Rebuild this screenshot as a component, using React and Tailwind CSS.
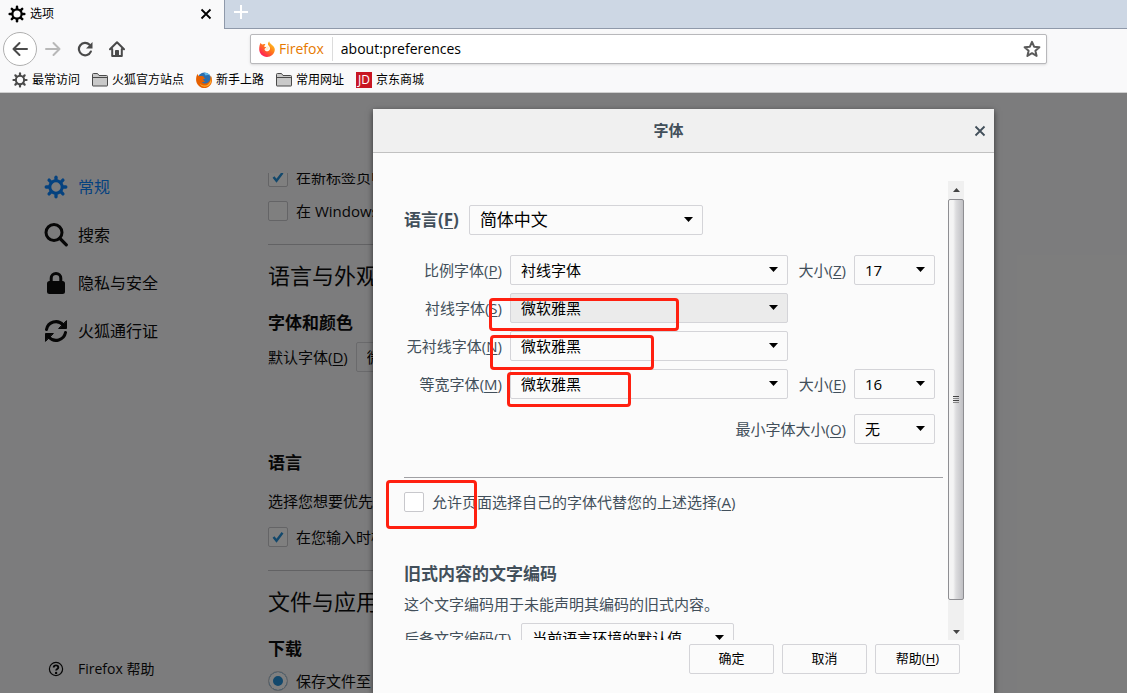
import { useState } from 'react';
import clsx from 'clsx';

const GearIcon = ({ className }) => (
  <svg className={className} viewBox="0 0 24 24" fill="none" stroke="currentColor" strokeLinecap="round">
    <circle cx="12" cy="12" r="6.2" strokeWidth="3" />
    {[0, 45, 90, 135, 180, 225, 270, 315].map((deg) => (
      <path key={deg} d="M12 5V2.2" strokeWidth="3.3" transform={`rotate(${deg} 12 12)`} />
    ))}
  </svg>
);

const SearchIcon = ({ className }) => (
  <svg className={className} viewBox="0 0 24 24" fill="none" stroke="currentColor" strokeLinecap="round">
    <circle cx="10" cy="9.5" r="8" strokeWidth="3" />
    <path d="M16 15.5l6.3 6.3" strokeWidth="3.2" />
  </svg>
);

const LockIcon = ({ className }) => (
  <svg className={className} viewBox="0 0 24 24" fill="none">
    <rect x="3" y="10" width="18" height="13" rx="2.5" fill="currentColor" />
    <path d="M7.2 11V7.2a4.8 4.8 0 0 1 9.6 0V11" stroke="currentColor" strokeWidth="3" />
  </svg>
);

const SyncIcon = ({ className }) => (
  <svg className={className} viewBox="0 0 24 24" fill="none" stroke="currentColor" strokeWidth="3" strokeLinecap="round">
    <path d="M2.5 10.5A9.6 9.6 0 0 1 19 5.8" />
    <path d="M21.5 13.5A9.6 9.6 0 0 1 5 18.2" />
    <path d="M22.5 2v7.5H15z" fill="currentColor" strokeWidth="1" strokeLinejoin="round" />
    <path d="M1.5 22v-7.5H9z" fill="currentColor" strokeWidth="1" strokeLinejoin="round" />
  </svg>
);

const HelpIcon = ({ className }) => (
  <svg className={className} viewBox="0 0 16 16" fill="none" stroke="currentColor">
    <circle cx="8" cy="8" r="6.6" strokeWidth="1.2" />
    <path d="M5.7 6.5C5.7 3.6 10.3 3.7 10.3 6.4c0 1.600-2.200 1.600-2.200 3.200" strokeWidth="1.9" />
    <circle cx="8.1" cy="11.9" r="1.2" fill="currentColor" stroke="none" />
  </svg>
);

const CloseIcon = ({ className }) => (
  <svg className={className} viewBox="0 0 12 12" fill="none" stroke="currentColor" strokeWidth="1.8">
    <path d="M1.5 1.5l9 9M10.5 1.5l-9 9" />
  </svg>
);

const FolderIcon = () => (
  <svg className="h-4 w-4" viewBox="0 0 16 16" fill="#c9c9c9" stroke="#4a4a4a">
    <path d="M.5 13.500v-11q0-1 1-1h4l1.500 2h7.500q1 0 1 1v9q0 .5-.5.500h-14q-.5 0-.5-.5z" />
    <path d="M.5 5.500h15" />
  </svg>
);

// Orange fox wrapped around a blue globe
const GlobeFoxIcon = () => (
  <svg className="h-4 w-4" viewBox="0 0 16 16">
    <circle cx="8.4" cy="7.4" r="6.8" fill="#2a6fb0" />
    <path d="M8 .8c2.600-.3 5 1 6 2.600-2-.8-3.400-.6-4.600.2z" fill="#5bb4e6" />
    <path d="M1.500 1.800C.2 4.200-.2 7.500.3 9.400 1.300 13.400 4.600 16 8.300 16c4.400 0 7.500-3.600 7.700-7.600.1-2-.5-4-1.500-5 .4 2.400-.2 5.600-2.400 7.200-2.300 1.700-5.400 1-6.400-.9 1.500.7 2.800.2 3.800-.7-1.700.2-2.600-.8-2.300-1.900.9.200 1.800-.2 1.900-.8-.9-.4-1.600-.8-1.400-1.900C5 4 4 4 3.200 4.300 2.500 3.700 1.700 2.900 1.500 1.800z" fill="#e66000" />
    <path d="M14.500 3.400c1 3.600 0 7.400-2.900 9.300-2.700 1.600-6 .8-7.900-1.500 1.300 4 6.600 4.700 9.600 1.900 2.400-2.300 2.800-6.700 1.200-9.700z" fill="#ffb02e" />
  </svg>
);

const FlameIcon = () => (
  <svg className="h-4 w-4" viewBox="0 0 16 16">
    <defs>
      <linearGradient id="flame" x1="1" y1="0" x2=".2" y2="1">
        <stop offset="0" stopColor="#ffe226" />
        <stop offset=".5" stopColor="#ff7a1a" />
        <stop offset="1" stopColor="#ff1060" />
      </linearGradient>
    </defs>
    <path d="M1.800 1.800C2.100 2.800 2.700 3.300 3.400 3.600 4.300 2.900 5.500 2.900 6.400 3.300L5 5.600l2.200.6C7 7.200 5.600 7.300 5.500 8.200c.3 1.800 2.500 2.800 4.200 1.600 2-1.400 1.400-4.200-.2-5.400C8.400 3.300 9 1.400 10.200.2c.2 1.900 2 2.700 3.400 4.200 1.600 1.300 2.300 2.900 2.200 4.600C15.400 13 12 15.900 8 15.900 3.600 15.900.3 12.400.2 8.200.2 5.700.7 3.400 1.800 1.800z" fill="url(#flame)" />
    <path d="M7 5.300l2.400.3c.9 1.400.4 3-1 3.500-1 .3-1.900 0-2.300-.6L7.400 7z" fill="#fff0d0" />
  </svg>
);

const Key = ({ children }) => (
  <>
    (<span className="underline underline-offset-2">{children}</span>)
  </>
);

const Dropdown = ({ id, options, width = 'w-full', className }) => (
  <div className={clsx('relative', width)}>
    <select
      id={id}
      className={clsx('block h-[30px] w-full appearance-none rounded-xs border border-[#d4d4d8] pl-2.5 text-black', className)}
    >
      {options.map((o) => (
        <option key={o}>{o}</option>
      ))}
    </select>
    <svg className="pointer-events-none absolute top-3 right-2.5 h-[5px] w-[9px]" viewBox="0 0 9 5">
      <path d="M0 0h9L4.500 5z" fill="#000" />
    </svg>
  </div>
);

const Checkbox = ({ id, checked, onChange }) => (
  <span className="relative h-5 w-5 shrink-0">
    <input
      id={id}
      type="checkbox"
      checked={checked}
      onChange={onChange}
      className="peer block h-5 w-5 appearance-none rounded-xs border border-[#c8c8cc] bg-white"
    />
    <svg className="pointer-events-none absolute inset-0 hidden h-5 w-5 peer-checked:block" viewBox="0 0 20 20" fill="none">
      <path d="M5.500 10l3 3.800 6-8" stroke="#2490d8" strokeWidth="2.4" />
    </svg>
  </span>
);

const categories = [
  { label: '常规', icon: GearIcon, active: true },
  { label: '搜索', icon: SearchIcon },
  { label: '隐私与安全', icon: LockIcon },
  { label: '火狐通行证', icon: SyncIcon },
];

const BrowserChrome = () => (
  <header className="shrink-0 bg-[#f9f9fa] text-black">
    <div className="flex h-[29px]">
      <div className="flex w-56 items-center pr-2 pb-0.5 pl-2">
        <GearIcon className="h-[18px] w-[18px]" />
        <span className="ml-1 flex-1 text-xs">选项</span>
        <button aria-label="关闭标签页" className="p-1">
          <CloseIcon className="h-3 w-3" />
        </button>
      </div>
      <div className="flex-1 border-b border-l border-[#8f99aa] bg-[#cdd7e4]">
        <button aria-label="新标签页" className="ml-2 block py-1">
          <svg className="h-4 w-4" viewBox="0 0 16 16" stroke="#fff" strokeWidth="2">
            <path d="M8 1v14M1 8h14" />
          </svg>
        </button>
      </div>
    </div>

    <div className="flex h-10 items-center pr-20 pl-[3px]">
      <button aria-label="后退" className="flex h-[34px] w-[34px] items-center justify-center rounded-full border border-[#b0b0b0] bg-white">
        <svg className="h-4 w-4" viewBox="0 0 16 16" fill="none" stroke="#4a4a4a" strokeWidth="2" strokeLinecap="round" strokeLinejoin="round">
          <path d="M15 8H1.500M7.500 2l-6 6 6 6" />
        </svg>
      </button>
      <button aria-label="前进" className="ml-2">
        <svg className="h-4 w-4" viewBox="0 0 16 16" fill="none" stroke="#b8b8b8" strokeWidth="2" strokeLinecap="round" strokeLinejoin="round">
          <path d="M1 8h13.500M8.500 2l6 6-6 6" />
        </svg>
      </button>
      <button aria-label="重新载入" className="ml-4">
        <svg className="h-4 w-4" viewBox="0 0 16 16" fill="none" stroke="#4a4a4a" strokeWidth="2.2" strokeLinecap="round">
          <path d="M13.800 10.600A6.200 6.200 0 1 1 12.600 3.800" />
          <path d="M15.500 1v6.500H9z" fill="#4a4a4a" stroke="none" />
        </svg>
      </button>
      <button aria-label="主页" className="ml-4">
        <svg className="h-4 w-4" viewBox="0 0 16 16" fill="none" stroke="#4a4a4a" strokeWidth="2" strokeLinecap="round" strokeLinejoin="round">
          <path d="M1 8.200L8 1.200l7 7M3.200 8v7h9.600V8" />
          <path d="M6.500 15V9.500h3V15z" fill="#4a4a4a" strokeWidth="1" />
        </svg>
      </button>
      <div className="ml-[125px] flex h-[30px] flex-1 items-center rounded-xs border border-[#b8b8bb] bg-white pr-[5px] pl-2 shadow-sm">
        <FlameIcon />
        <span className="ml-1 border-r border-[#dcdcdc] pr-2 text-sm leading-6 text-[#e67a00]">Firefox</span>
        <input
          aria-label="地址"
          defaultValue="about:preferences"
          className="ml-2 min-w-0 flex-1 text-sm text-black outline-none"
        />
        <button aria-label="收藏">
          <svg className="h-[18px] w-[18px]" viewBox="0 0 18 18" fill="none" stroke="#5a5a5a" strokeWidth="2" strokeLinejoin="round">
            <path d="M9 1.800l2.100 4.900 5.300.5-4 3.500 1.200 5.200L9 13.200l-4.600 2.700 1.200-5.200-4-3.500 5.300-.5z" />
          </svg>
        </button>
      </div>
    </div>

    <nav className="flex h-6 items-center gap-3 border-b border-[#cfcfcf] pb-0.5 pl-3 text-xs">
      <a href="#" className="flex items-center gap-1">
        <GearIcon className="h-4 w-4 text-[#4a4a4a]" />
        最常访问
      </a>
      <a href="#" className="flex items-center gap-1">
        <FolderIcon />
        火狐官方站点
      </a>
      <a href="#" className="flex items-center gap-1">
        <GlobeFoxIcon />
        新手上路
      </a>
      <a href="#" className="flex items-center gap-1">
        <FolderIcon />
        常用网址
      </a>
      <a href="#" className="flex items-center gap-1">
        <span className="flex h-4 w-4 items-center justify-center bg-[#c81623] text-xs text-white">JD</span>
        京东商城
      </a>
    </nav>
  </header>
);

const Sidebar = () => (
  <aside className="flex w-60 shrink-0 flex-col pt-[70px] pl-11">
    {categories.map(({ label, icon: Icon, active }) => (
      <a key={label} href="#" className={clsx('flex h-12 items-center gap-2.5 text-base', active ? 'text-[#0a84ff]' : 'text-[#0c0c0d]')}>
        <Icon className="h-6 w-6" />
        {label}
      </a>
    ))}
    <a href="#" className="mt-auto flex h-12 items-center gap-3.5 pl-1 text-sm">
      <HelpIcon className="h-4 w-4" />
      Firefox 帮助
    </a>
  </aside>
);

const Preferences = () => {
  const [newTab, setNewTab] = useState(true);
  const [taskbar, setTaskbar] = useState(false);
  const [spelling, setSpelling] = useState(true);

  return (
    <main className="mt-20 max-w-[692px] min-w-0 flex-1 overflow-hidden pl-7 text-[15px] whitespace-nowrap">
      <div className="-mt-1.5 flex h-5 items-center gap-2">
        <Checkbox id="newTab" checked={newTab} onChange={() => setNewTab(!newTab)} />
        <label htmlFor="newTab">在新标签页中打开链接</label>
      </div>
      <div className="mt-3.5 flex h-5 items-center gap-2">
        <Checkbox id="taskbar" checked={taskbar} onChange={() => setTaskbar(!taskbar)} />
        <label htmlFor="taskbar">在 Windows 任务栏中显示标签页预览</label>
      </div>
      <hr className="mt-[23px] border-[#c4c4c8]" />

      <h2 className="mt-3.5 text-[22px] leading-8">语言与外观</h2>
      <h3 className="mt-5 text-[17px] leading-6 font-bold">字体和颜色</h3>
      <div className="mt-[7px] flex items-center gap-2">
        <label htmlFor="defaultFont">默认字体<Key>D</Key></label>
        <Dropdown id="defaultFont" options={['微软雅黑']} width="w-72" />
      </div>

      <h3 className="mt-[79px] text-[17px] leading-6 font-bold">语言</h3>
      <p className="mt-3.5 leading-6">选择您想要优先使用哪种语言显示页面</p>
      <div className="mt-3.5 flex h-5 items-center gap-2">
        <Checkbox id="spelling" checked={spelling} onChange={() => setSpelling(!spelling)} />
        <label htmlFor="spelling">在您输入时检查拼写</label>
      </div>
      <hr className="mt-[23px] border-[#c4c4c8]" />

      <h2 className="mt-3.5 text-[22px] leading-8">文件与应用程序</h2>
      <h3 className="mt-5 text-[17px] leading-6 font-bold">下载</h3>
      <div className="mt-2.5 flex h-5 items-center gap-2">
        <input
          id="saveTo"
          type="radio"
          defaultChecked
          className="h-5 w-5 shrink-0 appearance-none rounded-full border border-[#c8c8cc] bg-[#2490d8] shadow-[inset_0_0_0_4px_#fff]"
        />
        <label htmlFor="saveTo">保存文件至</label>
      </div>
    </main>
  );
};

const Scrollbar = () => (
  <div className="flex w-4 shrink-0 flex-col items-stretch bg-[#f0f0f0]">
    <div className="flex h-[18px] items-center justify-center">
      <svg className="h-1 w-[7px]" viewBox="0 0 7 4">
        <path d="M3.500 0L7 4H0z" fill="#444" />
      </svg>
    </div>
    <div className="flex flex-1 flex-col items-center justify-center gap-px rounded-xs border border-[#8e8e92] bg-linear-to-r from-[#f4f4f4] from-30% via-[#dcdcde] via-50% to-[#c0c0c4]">
      <span className="h-px w-1.5 bg-[#444]" />
      <span className="h-px w-1.5 bg-[#888]" />
      <span className="h-px w-1.5 bg-[#444]" />
      <span className="h-px w-1.5 bg-[#888]" />
    </div>
    <div className="flex h-10 items-end justify-center pb-1.5">
      <svg className="h-1 w-[7px]" viewBox="0 0 7 4">
        <path d="M3.500 4L7 0H0z" fill="#444" />
      </svg>
    </div>
  </div>
);

const FontsDialog = () => {
  const [allowPages, setAllowPages] = useState(false);

  return (
    <section role="dialog" aria-labelledby="dialogTitle" className="relative flex w-[621px] flex-col bg-[#fbfbfb] text-[15px] whitespace-nowrap text-[#424f5a] shadow-[0_2px_6px_rgba(0,0,0,0.6)]">
      <div className="flex h-11 shrink-0 items-center border-b border-[#c1c1c1] bg-[#f0f0f0] pr-1">
        <h1 id="dialogTitle" className="flex-1 pr-1.5 text-center font-bold">字体</h1>
        <button aria-label="关闭" className="p-1">
          <CloseIcon className="h-3 w-3" />
        </button>
      </div>

      <div className="mt-7 mr-[30px] ml-[31px] flex min-h-0 flex-1">
        <div className="min-w-0 flex-1 overflow-hidden pt-6 pr-[5px]">
          <div className="flex items-center gap-2.5 text-[17px]">
            <label htmlFor="lang" className="font-bold">语言<Key>F</Key></label>
            <Dropdown id="lang" options={['简体中文']} width="w-[234px]" />
          </div>

          <div className="mt-5 grid grid-cols-[98px_1fr_50px_81px] items-center gap-2 pr-2">
            <label htmlFor="proportional" className="justify-self-end">比例字体<Key>P</Key></label>
            <Dropdown id="proportional" options={['衬线字体', '无衬线字体']} />
            <label htmlFor="sizeVar" className="justify-self-end">大小<Key>Z</Key></label>
            <Dropdown id="sizeVar" options={['17', '16']} />

            <label htmlFor="serif" className="justify-self-end">衬线字体<Key>S</Key></label>
            <Dropdown id="serif" options={['微软雅黑']} className="bg-[#ebebeb]" />

            <label htmlFor="sans" className="col-start-1 justify-self-end">无衬线字体<Key>N</Key></label>
            <Dropdown id="sans" options={['微软雅黑']} />

            <label htmlFor="mono" className="col-start-1 justify-self-end">等宽字体<Key>M</Key></label>
            <Dropdown id="mono" options={['微软雅黑']} />
            <label htmlFor="sizeMono" className="justify-self-end">大小<Key>E</Key></label>
            <Dropdown id="sizeMono" options={['16', '17']} />
          </div>

          <div className="mt-[15px] flex items-center justify-end gap-2 pr-2">
            <label htmlFor="minSize">最小字体大小<Key>O</Key></label>
            <Dropdown id="minSize" options={['无']} width="w-[81px]" />
          </div>

          <hr className="mt-[33px] border-[#a0a0a4]" />

          <div className="mt-3.5 flex h-5 items-center gap-2">
            <Checkbox id="allowPages" checked={allowPages} onChange={() => setAllowPages(!allowPages)} />
            <label htmlFor="allowPages">允许页面选择自己的字体代替您的上述选择<Key>A</Key></label>
          </div>

          <h2 className="mt-12 text-[17px] leading-7 font-bold">旧式内容的文字编码</h2>
          <p className="mt-1 leading-6">这个文字编码用于未能声明其编码的旧式内容。</p>
          <div className="mt-[7px] flex items-center gap-2.5">
            <label htmlFor="fallback">后备文字编码<Key>T</Key></label>
            <Dropdown id="fallback" options={['当前语言环境的默认值']} width="w-[213px]" />
          </div>
        </div>
        <Scrollbar />
      </div>

      <div className="mt-1 mr-[34px] mb-[19px] flex justify-end gap-2 text-[13px] text-black">
        <button className="h-[30px] w-[85px] rounded-xs border border-[#d4d4d8]">确定</button>
        <button className="h-[30px] w-[85px] rounded-xs border border-[#d4d4d8]">取消</button>
        <button className="h-[30px] w-[85px] rounded-xs border border-[#d4d4d8]">帮助<Key>H</Key></button>
      </div>

      {/* Highlight marks over the changed settings */}
      <div className="pointer-events-none absolute top-[189px] left-[116px] h-[33px] w-[190px] rounded-sm border-3 border-[#ff2010]" />
      <div className="pointer-events-none absolute top-[226px] left-[117px] h-[35px] w-[164px] rounded-sm border-3 border-[#ff2010]" />
      <div className="pointer-events-none absolute top-[263px] left-[134px] h-[35px] w-[124px] rounded-sm border-3 border-[#ff2010]" />
      <div className="pointer-events-none absolute top-[371px] left-[13px] h-[49px] w-[91px] rounded-sm border-3 border-[#ff2010]" />
    </section>
  );
};

const App = () => {
  return (
    <div className="flex h-screen flex-col overflow-hidden font-['Open_Sans','Noto_Sans_CJK_SC',sans-serif]">
      <BrowserChrome />
      <div className="relative flex min-h-0 flex-1 bg-[#f9f9fa] text-[#0c0c0d]">
        <Sidebar />
        <Preferences />
        <div className="absolute inset-0 flex justify-center overflow-hidden bg-black/50 pt-4 pl-60">
          <FontsDialog />
        </div>
      </div>
    </div>
  );
};

export default App;
